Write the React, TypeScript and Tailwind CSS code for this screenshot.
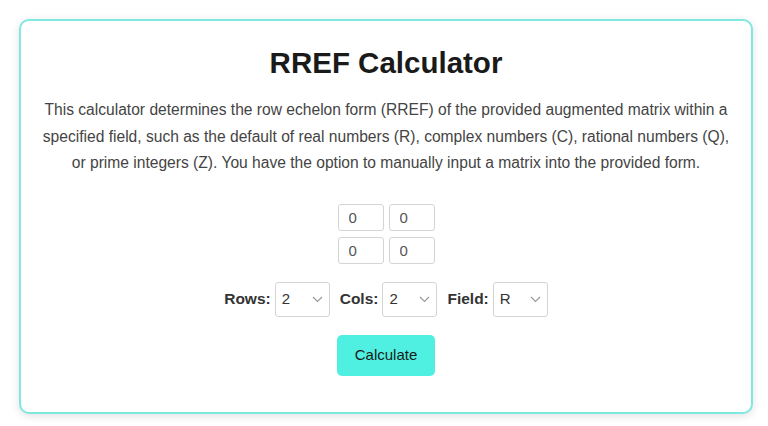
import React, { useState } from "react";

const FONT = { fontFamily: '"Liberation Sans", Arial, sans-serif' };

function Select({ value, options, width }: { value: string; options: string[]; width: string }) {
  return (
    <div className={`relative h-[35px] ${width}`}>
      <select
        defaultValue={value}
        className="h-full w-full appearance-none rounded-[3px] border border-[#d4d4d4] bg-white pl-[6px] text-[15px] text-[#333] outline-none"
        style={FONT}
      >
        {options.map((o) => (
          <option key={o}>{o}</option>
        ))}
      </select>
      <svg
        className="pointer-events-none absolute right-[7px] top-[14px]"
        width="11"
        height="7"
        viewBox="0 0 11 7"
        fill="none"
        stroke="#9a9a9a"
        strokeWidth="1.2"
      >
        <path d="M1 1l4.5 4.5L10 1" />
      </svg>
    </div>
  );
}

export default function App() {
  const [cells, setCells] = useState(["0", "0", "0", "0"]);

  return (
    <div className="min-h-screen bg-white pt-[19px]" style={FONT}>
      <div className="mx-[19px] h-[395px] w-[734px] rounded-[10px] border-2 border-[#7fe9df] bg-white px-[20px] pt-[22px] shadow-[0_2px_8px_rgba(0,0,0,0.12)]">
        <h1 className="text-center text-[29.5px] font-bold leading-[40px] text-[#1a1a1a]">RREF Calculator</h1>
        <p className="mt-[14px] text-center text-[15.6px] leading-[26.5px] text-[#444]">
          This calculator determines the row echelon form (RREF) of the provided augmented matrix within a
          specified field, such as the default of real numbers (R), complex numbers (C), rational numbers (Q),
          or prime integers (Z). You have the option to manually input a matrix into the provided form.
        </p>

        <div className="mt-[27px] flex justify-center">
          <div className="grid grid-cols-2 gap-x-[5px] gap-y-[6px]">
            {cells.map((c, i) => (
              <input
                key={i}
                value={c}
                onChange={(e) => {
                  const next = [...cells];
                  next[i] = e.target.value;
                  setCells(next);
                }}
                className="h-[27px] w-[46px] rounded-[3px] border border-[#d4d4d4] pl-[10px] text-[15px] text-[#555] outline-none"
                style={FONT}
              />
            ))}
          </div>
        </div>

        <div className="mt-[18px] flex items-center justify-center gap-[4px] text-[15.5px] text-[#333]">
          <span className="font-bold">Rows:</span>
          <Select value="2" options={["1", "2", "3", "4"]} width="w-[55px]" />
          <span className="ml-[6px] font-bold">Cols:</span>
          <Select value="2" options={["1", "2", "3", "4"]} width="w-[55px]" />
          <span className="ml-[6px] font-bold">Field:</span>
          <Select value="R" options={["R", "C", "Q", "Z"]} width="w-[55px]" />
        </div>

        <div className="mt-[18px] flex justify-center">
          <button
            type="button"
            className="h-[41px] w-[98px] rounded-[5px] bg-[#4ff0e1] text-[15px] text-[#1a1a1a]"
            style={FONT}
          >
            Calculate
          </button>
        </div>
      </div>
    </div>
  );
}
